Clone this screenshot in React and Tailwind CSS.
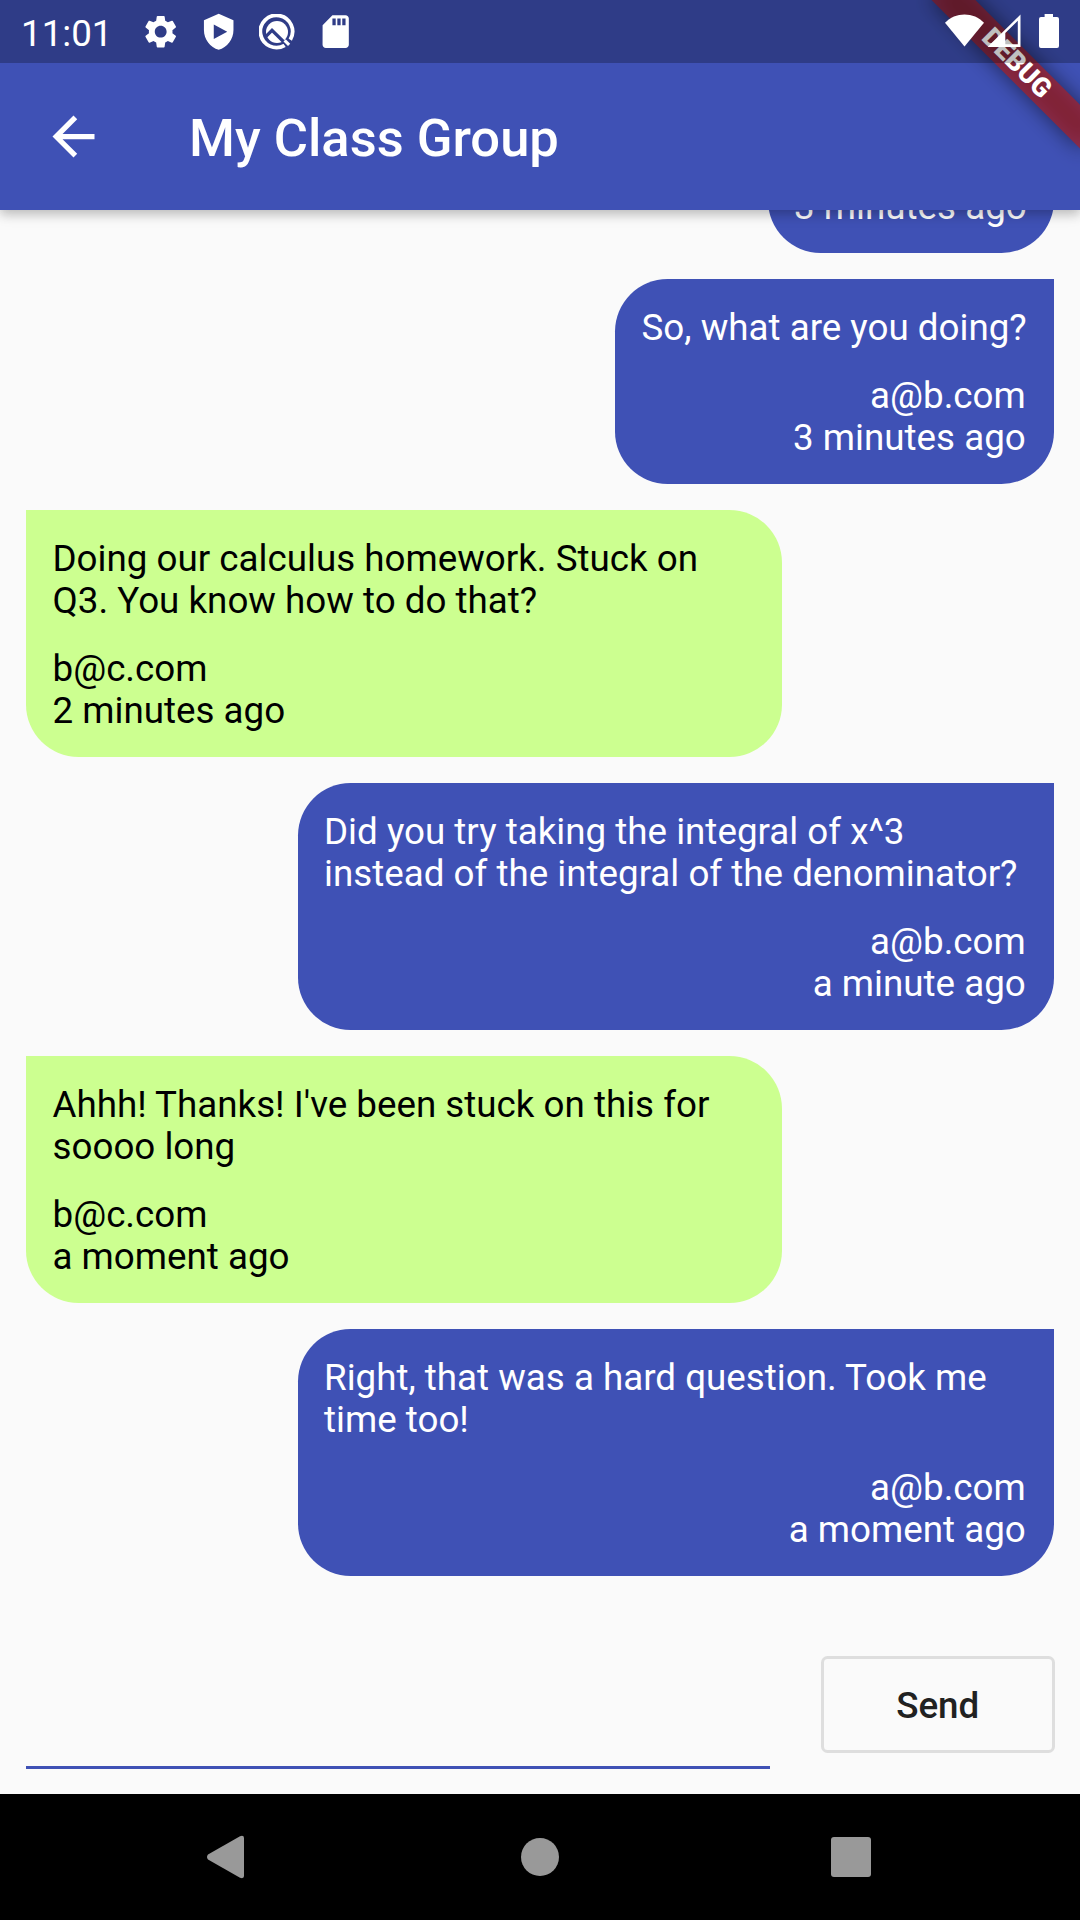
import { MdArrowBack, MdSettings, MdSdCard } from "react-icons/md";

const messages = [
  { mine: true, text: "", sender: "", time: "3 minutes ago", clipped: true },
  { mine: true, text: "So, what are you doing?", sender: "a@b.com", time: "3 minutes ago" },
  { mine: false, text: "Doing our calculus homework. Stuck on Q3. You know how to do that?", sender: "b@c.com", time: "2 minutes ago" },
  { mine: true, text: "Did you try taking the integral of x^3 instead of the integral of the denominator?", sender: "a@b.com", time: "a minute ago" },
  { mine: false, text: "Ahhh! Thanks! I've been stuck on this for soooo long", sender: "b@c.com", time: "a moment ago" },
  { mine: true, text: "Right, that was a hard question. Took me time too!", sender: "a@b.com", time: "a moment ago" },
];

function Bubble({ mine, text, sender, time, clipped }) {
  const side = mine
    ? "self-end items-end text-right bg-[#3f51b5] text-white rounded-tl-[52.5px] pl-[26.25px] pr-[27px]"
    : "self-start items-start bg-[#ccff90] text-black rounded-tr-[52.5px] px-[26.25px]";
  return (
    <div className={`flex max-w-[756px] shrink-0 flex-col gap-[25.5px] rounded-b-[52.5px] pb-[25.25px] ${clipped ? "pt-20" : "pt-[28px]"} ${side}`}>
      {text && <p className="w-full text-left">{text}</p>}
      <div className={mine && !clipped ? "pr-px" : ""}>
        {sender && <p>{sender}</p>}
        <p>{time}</p>
      </div>
    </div>
  );
}

function DebugRibbon() {
  return (
    <div className="pointer-events-none absolute top-0 right-0 h-[210px] w-[210px] overflow-hidden">
      <div className="absolute top-0 left-full h-0 w-0 origin-top-left rotate-45">
        <div className="absolute top-[73.5px] -left-[105px] h-[31.5px] w-[210px] bg-black/50 blur-[10.4px]" />
        <div className="absolute top-[73.5px] -left-[105px] flex h-[31.5px] w-[210px] items-center justify-center bg-[#b71c1c]/63 text-[26.8px] leading-none font-black text-white">
          DEBUG
        </div>
      </div>
    </div>
  );
}

function ShieldPlay() {
  return (
    <svg viewBox="0 0 24 24" className="size-[39.4px]" fill="currentColor">
      <path fillRule="evenodd" d="M12 1 3 5v6c0 5.55 3.84 10.74 9 12 5.16-1.26 9-6.45 9-12V5l-9-4zM9 7.6v8.8l8.2-4.4L9 7.6z" />
    </svg>
  );
}

function CircleBadge() {
  return (
    <svg viewBox="0 0 36 36" className="size-9" fill="none">
      <path d="M26.3 31.9A16.100 16.100 0 1 1 31.900 26.300" transform="translate(-.6 -.6)" stroke="currentColor" strokeWidth="3.8" />
      <circle cx="18" cy="18" r="11" fill="currentColor" />
      <path d="M7 22.300 13 16.300 31 34" stroke="#2f3d88" strokeWidth="3.2" />
      <path d="m24.500 27.500 2.200-2.200 4.500 4.500-2.200 2.200z" fill="currentColor" />
    </svg>
  );
}

function StatusBar() {
  return (
    <div className="relative z-20 flex h-[63px] items-center bg-black/25 pt-px pl-[21px] text-white">
      <span className="w-[120px] pt-1 text-[36.75px] leading-[42px]">11:01</span>
      <div className="flex flex-1 items-center">
        <div className="flex w-[58px] justify-start"><MdSettings className="size-[39.4px]" /></div>
        <div className="flex w-[60px] justify-start"><ShieldPlay /></div>
        <div className="flex w-[56.5px] justify-start"><CircleBadge /></div>
        <MdSdCard className="size-[39.4px]" />
      </div>
      <svg viewBox="0 0 120 40" className="mr-[19px] h-10 w-[120px]" fill="currentColor">
        <path d="M4 10.8C14-.4 33-.4 43 10.8L23.5 34.4z" />
        <path fillRule="evenodd" d="M46.5 34.900 79.500 2.500v32.400zm17.800-2.700h12.500V8.800L64.300 21z" />
        <path d="M103.600 2h8.400v3h4q2 0 2 2v27q0 2-2 2H100q-2 0-2-2V7q0-2 2-2h3.600z" />
      </svg>
    </div>
  );
}

export default function App() {
  return (
    <div className="relative flex h-[1920px] w-[1080px] flex-col overflow-hidden bg-[#fafafa] font-['Roboto',sans-serif]">
      <header className="relative z-10 h-[210px] shrink-0 bg-[#3f51b5] shadow-[0_4px_10px_0_rgba(0,0,0,0.20),0_6px_14px_0_rgba(0,0,0,0.07)]">
        <DebugRibbon />
        <StatusBar />
        <div className="flex h-[147px] items-center pl-[42px] text-white">
          <MdArrowBack className="size-[63px]" />
          <h1 className="ml-[84px] pt-0.5 text-[52.5px] leading-[62px] font-medium">My Class Group</h1>
        </div>
      </header>

      <main className="flex min-h-0 flex-1 flex-col">
        <section className="flex min-h-0 flex-1 flex-col justify-end gap-[26.25px] overflow-hidden px-[26.25px] text-[36.75px] leading-[42px]">
          {messages.map((m, i) => (
            <Bubble key={i} {...m} />
          ))}
        </section>
        <form className="flex h-[218.25px] shrink-0 items-end gap-[51.5px] pr-[25px] pl-[26.25px]">
          <input aria-label="Message" className="mb-[25px] h-[120px] flex-1 border-b-[3px] border-[#3f51b5] bg-transparent text-[42px] outline-none" />
          <button type="button" className="mb-[41px] h-[97px] w-[233.6px] rounded-[6.5px] border-[3px] border-[#dedede] pt-0.5 pr-px text-[36.75px] leading-[42px] font-medium text-[#212121]">
            Send
          </button>
        </form>
      </main>

      <nav className="flex h-[126px] shrink-0 items-center bg-black text-[#999]">
        <svg viewBox="0 0 1080 126" className="h-[126px] w-full" fill="currentColor">
          <path d="M208 60.500 240 42.200Q244 41 244 44V82Q244 85 240 83.800L208 65.500Q206 63 208 60.500z" />
          <circle cx="540" cy="63" r="19" />
          <rect x="831" y="43" width="40" height="40" rx="3" />
        </svg>
      </nav>
    </div>
  );
}
